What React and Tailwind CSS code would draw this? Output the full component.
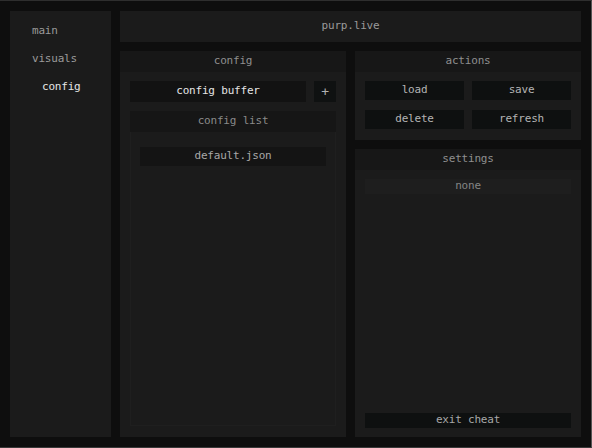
const mono = "font-['DejaVu_Sans_Mono','Liberation_Mono',monospace] text-[11px] tracking-[-0.2px]"

const Panel = ({ title, className = '', children }) => (
  <div className={`flex flex-col bg-[#1b1b1b] ${className}`}>
    <div className="h-[21px] shrink-0 flex items-center justify-center bg-[#171717] text-[#8f8f8f]">
      {title}
    </div>
    {children}
  </div>
)

const ActionButton = ({ label }) => (
  <button className="h-[19px] flex items-center justify-center bg-[#0e1010] text-[#b4b4b4]">
    {label}
  </button>
)

export default function App() {
  return (
    <div
      className={`w-[592px] h-[448px] bg-[#0e0e0e] border-t border-r border-b border-t-[#2e2e2e] border-r-[#555555] border-b-[#3a3a3a] flex gap-[9px] pl-[10px] pr-[10px] pt-[10px] pb-[10px] ${mono}`}
    >
      {/* sidebar tabs */}
      <div className="w-[101px] shrink-0 bg-[#1b1b1b] flex flex-col pt-[6px] pl-[22px]">
        <div className="h-[28px] flex items-center text-[#9a9a9a]">main</div>
        <div className="h-[28px] flex items-center text-[#9a9a9a]">visuals</div>
        <div className="h-[28px] flex items-center pl-[10px] text-[#e6e6e6]">config</div>
      </div>

      <div className="flex-1 flex flex-col gap-[9px]">
        <div className="h-[31px] shrink-0 bg-[#1b1b1b] flex items-center justify-center text-[#9a9a9a]">
          purp.live
        </div>

        <div className="flex-1 flex gap-[9px]">
          {/* config column */}
          <Panel title="config" className="flex-1">
            <div className="flex-1 flex flex-col px-[10px] pt-[9px] pb-[11px] gap-[9px]">
              <div className="flex gap-[8px] h-[21px]">
                <div className="flex-1 flex items-center justify-center bg-[#121212] text-[#e6e6e6]">
                  config buffer
                </div>
                <button className="w-[22px] flex items-center justify-center bg-[#0f1111] text-[#b0b0b0] text-[13px]">
                  +
                </button>
              </div>
              <div className="flex-1 flex flex-col">
                <div className="h-[21px] shrink-0 flex items-center justify-center bg-[#161616] text-[#8a8a8a]">
                  config list
                </div>
                <div className="flex-1 border border-t-0 border-[#1f1f1f] px-[9px] pt-[15px]">
                  <div className="h-[19px] flex items-center justify-center bg-[#141414] text-[#a8a8a8]">
                    default.json
                  </div>
                </div>
              </div>
            </div>
          </Panel>

          {/* actions + settings column */}
          <div className="flex-1 flex flex-col gap-[9px]">
            <Panel title="actions" className="h-[89px] shrink-0">
              <div className="grid grid-cols-2 gap-x-[8px] gap-y-[10px] px-[10px] pt-[9px]">
                <ActionButton label="load" />
                <ActionButton label="save" />
                <ActionButton label="delete" />
                <ActionButton label="refresh" />
              </div>
            </Panel>

            <Panel title="settings" className="flex-1">
              <div className="flex-1 flex flex-col justify-between px-[10px] pt-[9px] pb-[9px]">
                <div className="h-[15px] flex items-center justify-center bg-[#1e1e1e] text-[#858585]">
                  none
                </div>
                <button className="h-[15px] flex items-center justify-center bg-[#0e1010] text-[#a8a8a8]">
                  exit cheat
                </button>
              </div>
            </Panel>
          </div>
        </div>
      </div>
    </div>
  )
}
